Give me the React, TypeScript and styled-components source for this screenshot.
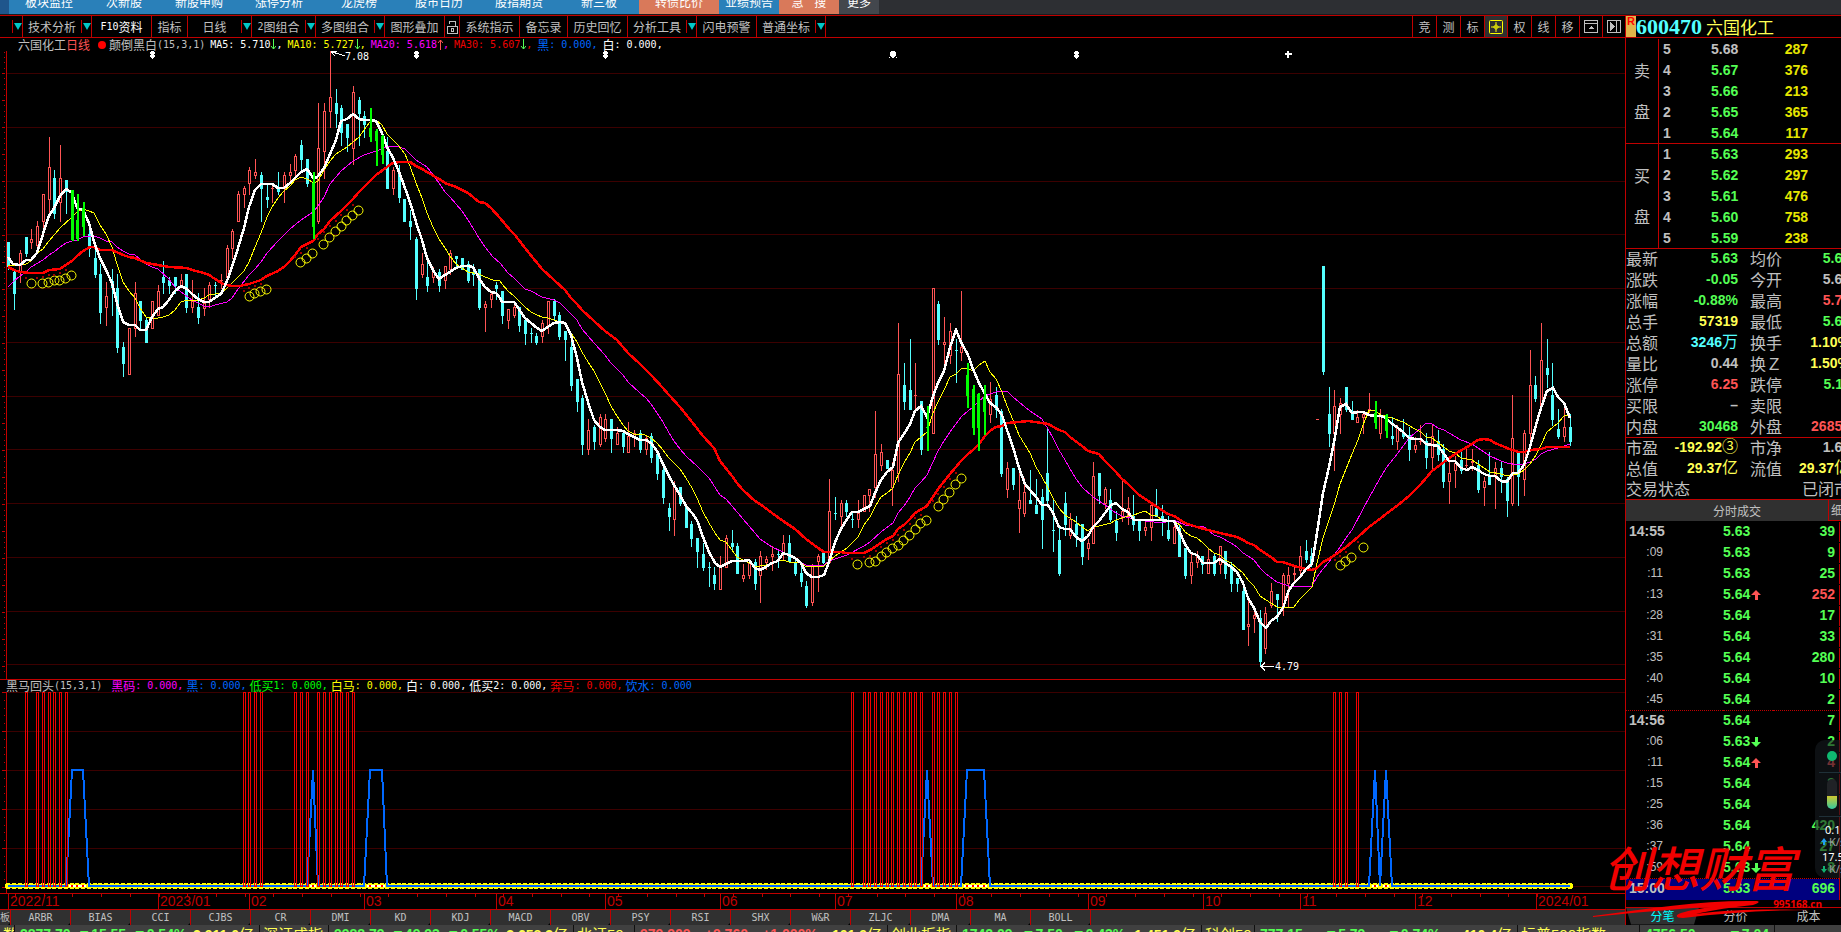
import React from "react";
import styled, { createGlobalStyle } from "styled-components";

const RED = "#c00000";
const GREY = "#c0c0c0";
const GREEN = "#54ff54";
const CYAN = "#54ffff";
const YELLOW = "#ffff54";
const ROSE = "#ff5454";
const PANEL = "#303030";

const Global = createGlobalStyle`
  *, *::before, *::after { box-sizing: border-box; }
  body { margin: 0; background: #000; color: ${GREY}; font: 12px "Noto Sans CJK SC", sans-serif; overflow: hidden; }
  button { margin: 0; padding: 0; border: 0; background: none; color: inherit; font: inherit; cursor: pointer; white-space: nowrap; }
  table { border-collapse: collapse; table-layout: fixed; }
  th, td { padding: 0; font-weight: normal; text-align: left; white-space: nowrap; }
`;

const Page = styled.div`
  position: relative;
  display: flex;
  flex-direction: column;
  height: 100vh;
  overflow: hidden;
  background: #000;
`;

/* ---------- top strip ---------- */
const TopStrip = styled.nav`
  display: flex;
  align-items: flex-end;
  flex: none;
  height: 15px;
  padding-left: 9px;
  overflow: hidden;
  border-bottom: 1px solid #1b1c1e;
  background: linear-gradient(to right, #1f568c 9px, #2d2f33 9px);
`;
const StripTab = styled.button<{ $w: number; $bg: string }>`
  flex: none;
  width: ${(p) => p.$w}px;
  height: 24px;
  line-height: 22px;
  text-align: center;
  white-space: pre;
  color: #fff;
  background: ${(p) => p.$bg};
`;

/* ---------- main ---------- */
const Main = styled.main`
  display: flex;
  flex: none;
  height: 910px;
  border-top: 1px solid ${RED};
`;
const Left = styled.section`
  display: flex;
  flex-direction: column;
  flex: 1;
  min-width: 0;
  overflow: hidden;
`;
const Toolbar = styled.div`
  display: flex;
  align-items: stretch;
  flex: none;
  height: 22px;
  padding-left: 12px;
  border-bottom: 1px solid ${RED};
`;
const ToolButton = styled.button<{ $w: number; $end?: boolean; $active?: boolean }>`
  display: flex;
  align-items: center;
  justify-content: center;
  flex: none;
  width: ${(p) => p.$w}px;
  border-right: ${(p) => (p.$end ? `1px solid ${RED}` : "0")};
  color: ${(p) => (p.$active ? "#fff" : GREY)};
  line-height: 20px;
`;
const ArrowButton = styled.button`
  display: flex;
  align-items: center;
  flex: none;
  width: 11px;
  border-right: 1px solid ${RED};
  &::before { content: ""; width: 1px; height: 13px; background: ${RED}; }
  &::after { content: ""; width: 0; height: 0; margin-left: 1px; border: 4px solid transparent; border-top: 7px solid #00c8c8; border-bottom: 0; }
`;
const Spacer = styled.div`
  flex: 1;
`;
const SideTool = styled.button<{ $on?: boolean; $w?: number }>`
  display: flex;
  align-items: center;
  justify-content: center;
  flex: none;
  width: ${(p) => p.$w || 24}px;
  border-left: 1px solid ${RED};
  background: ${(p) => (p.$on ? PANEL : "none")};
`;

const Mono = styled.span`
  font-family: "DejaVu Sans Mono", monospace;
  font-size: 10px;
`;
const Legend = styled.div<{ $h: number; $pad: number; $gap: number }>`
  display: flex;
  align-items: center;
  flex: none;
  gap: ${(p) => p.$gap}px;
  height: ${(p) => p.$h}px;
  padding-left: ${(p) => p.$pad}px;
  line-height: 12px;
  white-space: pre;
`;
const LegendItem = styled.span<{ $c?: string }>`
  display: flex;
  align-items: center;
  color: ${(p) => p.$c || GREY};
`;
const Dot = styled.i`
  width: 8px;
  height: 8px;
  margin: 0 3px 0 8px;
  border-radius: 50%;
  background: #ff0000;
`;
const Chart = styled.svg`
  display: block;
  flex: none;
  width: 100%;
`;
const SubPanel = styled.div`
  flex: none;
  border-top: 1px solid ${RED};
  border-bottom: 1px solid ${RED};
`;
const TabRow = styled.div`
  display: flex;
  flex: none;
  height: 15px;
  background: ${PANEL};
`;
const IndicatorTab = styled.button<{ $w: number }>`
  position: relative;
  flex: none;
  width: ${(p) => p.$w}px;
  border-right: 1px solid ${RED};
  font-family: "DejaVu Sans Mono", "Noto Sans CJK SC", monospace;
  font-size: 10px;
  line-height: 14px;
  text-align: center;
  overflow: hidden;
  &::after {
    content: "";
    position: absolute;
    right: -1px;
    bottom: 0;
    border: 3px solid transparent;
    border-right: 0;
    border-top: 0;
    border-bottom-color: #000;
  }
`;

/* ---------- quote panel ---------- */
const Quote = styled.aside`
  flex: none;
  width: 216px;
  border-left: 1px solid ${RED};
  overflow: hidden;
`;
const QuoteHead = styled.h1`
  display: flex;
  align-items: center;
  height: 22px;
  margin: 0;
  border-bottom: 1px solid ${RED};
  font-weight: normal;
`;
const Badge = styled.span`
  width: 10px;
  height: 21px;
  background: #e0b44a;
  color: #f00;
  font: bold 11px/11px "Liberation Sans", sans-serif;
  text-align: center;
`;
const Code = styled.span`
  font: bold 22px/20px "Liberation Serif", serif;
  color: ${CYAN};
`;
const StockName = styled.span`
  margin-left: 4px;
  font-size: 17px;
  line-height: 20px;
  color: ${YELLOW};
`;
const Block = styled.div<{ $h: number; $top?: number }>`
  display: flex;
  height: ${(p) => p.$h}px;
  padding-top: ${(p) => p.$top || 0}px;
  overflow: hidden;
  border-bottom: 1px solid ${RED};
`;
const Side = styled.div`
  display: flex;
  flex-direction: column;
  flex: none;
  gap: 21px;
  width: 33px;
  padding-top: 21px;
  border-right: 1px solid ${RED};
  font-size: 16px;
  line-height: 20px;
  text-align: center;
`;
const Num = styled.td<{ $c?: string; $right?: boolean }>`
  color: ${(p) => p.$c || GREY};
  text-align: ${(p) => (p.$right ? "right" : "left")};
  font-family: "Liberation Sans", "Noto Sans CJK SC", sans-serif;
  font-size: 14px;
  font-weight: bold;
`;
const Book = styled.table`
  flex: none;
  width: 182px;
  tr { height: 21px; line-height: 21px; }
  th { padding-left: 4px; font: bold 14px/21px "Liberation Sans", sans-serif; }
`;
const Facts = styled.table`
  flex: none;
  width: 224px;
  tr { height: 21px; line-height: 19px; vertical-align: top; }
  th { font-size: 16px; }
  th + td + th { padding-left: 12px; }
`;
const Unit = styled.span`
  font-size: 16px;
  font-weight: normal;
  line-height: 16px;
`;
const Status = styled.div`
  display: flex;
  justify-content: space-between;
  width: 224px;
  height: 19px;
  font-size: 16px;
  line-height: 17px;
`;
const Column = styled.div`
  flex: none;
`;
const TickHead = styled.div`
  display: flex;
  height: 21px;
  background: ${PANEL};
  overflow: hidden;
`;
const TickTab = styled.button<{ $grow?: boolean }>`
  flex: ${(p) => (p.$grow ? "none" : "1")};
  width: ${(p) => (p.$grow ? "202px" : "auto")};
  padding-left: ${(p) => (p.$grow ? "20px" : "2px")};
  border-left: ${(p) => (p.$grow ? "0" : `1px solid ${RED}`)};
  border-bottom: ${(p) => (p.$grow ? "0" : `1px solid ${RED}`)};
  line-height: 18px;
`;
const Ticks = styled.table`
  width: 214px;
  border-right: 1px solid ${RED};
`;
const Tick = styled.tr<{ $dotted?: boolean; $on?: boolean }>`
  height: 21px;
  line-height: 18px;
  vertical-align: top;
  background: ${(p) => (p.$on ? "#00007f" : "none")};
  td, th { border-top: ${(p) => (p.$dotted ? `1px dotted ${RED}` : "1px solid transparent")}; }
  td:last-child { padding-right: 4px; }
`;
const Time = styled.th<{ $major?: boolean }>`
  padding-left: 3px;
  font: ${(p) => (p.$major ? "bold 14px" : "12px")} / 18px "Liberation Sans", sans-serif;
  text-align: ${(p) => (p.$major ? "left" : "right")};
`;
const Arrow = styled.svg`
  margin-left: 1px;
  vertical-align: -1px;
`;
const BottomTabs = styled.div`
  display: flex;
  height: 19px;
  margin-top: 7px;
  border-top: 1px solid ${RED};
  border-bottom: 1px solid ${RED};
`;
const BottomTab = styled.button<{ $on?: boolean }>`
  flex: none;
  width: 73px;
  line-height: 16px;
  color: ${(p) => (p.$on ? "#00ffff" : GREY)};
  background: ${(p) => (p.$on ? PANEL : "none")};
  clip-path: polygon(0 0, 100% 0, calc(100% - 5px) 100%, 5px 100%);
`;
const VolumeText = styled.span`
  display: inline-block;
  width: 47px;
  text-align: right;
`;

/* ---------- ticker ---------- */
const Ticker = styled.footer`
  display: flex;
  flex: 1;
  min-height: 0;
  overflow: hidden;
  background: #404040;
`;
const Cell = styled.div<{ $w: number; $name?: boolean }>`
  display: flex;
  flex: none;
  justify-content: space-between;
  gap: 6px;
  width: ${(p) => p.$w}px;
  height: 22px;
  padding: 0 ${(p) => (p.$name ? 3 : 5)}px;
  border-right: 1px solid #101010;
  overflow: hidden;
  color: ${YELLOW};
  font: bold 14px/19px "Liberation Sans", "Noto Sans CJK SC", sans-serif;
  white-space: nowrap;
`;
const IndexName = styled.span`
  font-weight: normal;
  font-size: 15px;
`;
const Move = styled.span<{ $up?: boolean }>`
  color: ${(p) => (p.$up ? ROSE : GREEN)};
`;

/* ---------- overlays ---------- */
const NetWidget = styled.div`
  position: absolute;
  top: 740px;
  right: 0;
  width: 26px;
  height: 138px;
  border-radius: 10px 0 0 10px;
  background: rgba(22, 26, 31, 0.6);
  overflow: hidden;
  color: #fff;
`;
const Mark = styled.div`
  position: absolute;
  top: 838px;
  right: 36px;
  width: 212px;
  height: 84px;
  color: #f00000;
  pointer-events: none;
`;
const MarkText = styled.div`
  font: italic 500 48px/56px "Noto Sans CJK SC", sans-serif;
  text-align: center;
`;
const MarkSite = styled.div`
  position: absolute;
  right: -17px;
  top: 58px;
  font: bold 10px/16px "Open Sans", sans-serif;
`;
const MarkStroke = styled.svg`
  position: absolute;
  left: 0;
  top: 56px;
`;

/* ---------- chart data ---------- */
type Kind = "u" | "d" | "g";
interface Segment {
  first: number;
  x: number;
  y: number;
  bars: string;
  ma5: string;
  ma10: string;
  ma20: string;
  ma30: string;
  rings: string;
}

/* Bars: kind high bodyTop bodyBottom low, in thirds of a pixel below the segment's origin. */
const SEGMENTS: Segment[] = [
  {
    first: 0, x: 0, y: 40,
    bars: `d606 606 680 690|d690 697 762 810|u630 639 700 729|d591 591 642 651|u567 597 608 627|u543 558 617 636|u462 462 545 576|u291 381 479 530|d390 414 522 537|u315 414 488 546|d420 420 455 522|g450 450 600 602|g462 540 596 602|g486 503 560 588|d545 583 626 651|d620 654 705 714|d672 702 819 852|u726 768 803 858|d687 722 745 828|d702 744 924 939|d906 921 972 1011|u864 864 1004 1005|u726 759 866 891|d783 783 843 867|d831 840 909 909|u783 783 866 867|u735 753 827 828|d663 711 729 762|d711 720 738 762|d711 711 738 762|u702 720 737 741|d702 702 804 819|u720 784 803 819|d759 801 834 852|u744 789 806 828|u726 735 781 803|d726 735 737 774|u702 720 722 747|u615 624 713 729|u567 573 626 657|u453 462 545 546|u438 444 464 504|u381 390 431 465|u357 396 407 417|d396 405 447 546|d432 471 480 504|u438 444 446 489|d396 444 456 465|u396 405 446 489|u372 396 407 432|u342 348 392 420|d300 315 360 392|d357 357 432 440|g396 430 560 597|u189 324 545 552|u189 213 335 417|u33 171 215 264|d147 189 222 264|d195 204 279 318|d252 252 294 336|u138 156 326 375|d171 180 222 318|d213 228 255 294|g204 264 290 306|g267 273 303 378|g285 288 345 372|d291 333 447 447|u380 390 446 465|d375 402 474 489|d477 477 546 546|d510 543 561 600|d591 597 747 780|u639 672 704 714|d654 711 738 756|u680 696 713 728|d687 696 738 756|u678 678 722 747|u630 639 689 704|d648 648 657 684|d654 654 690 690|d663 672 723 729|d672 696 705 738|d687 687 804 810|u783 792 803 876|u756 762 779 804|d726 735 747 780`,
    ma5: "25,650 40,672 61,674 79,661 94,661 112,640 130,583 148,528 163,503 181,468 199,446 215,460 231,505 249,510 267,550 283,605 301,654 319,690 337,730 352,790 370,847 388,855 406,855 421,870 439,870 457,832 475,808 490,801 508,780 526,753 544,738 560,747 577,762 595,777 613,786 628,786 646,775 664,762 682,722 697,682 715,625 733,565 748,500 766,450 784,431 802,432 817,432 835,444 853,443 871,430 886,415 904,395 922,388 943,417 955,408 973,385 991,342 1009,300 1024,242 1042,236 1060,223 1078,236 1093,240 1110,240 1128,242 1146,280 1162,322 1180,355 1198,395 1216,443 1231,485 1249,545 1267,600 1282,655 1300,690 1318,717 1336,705 1351,695 1369,683 1387,678 1405,679 1420,681 1438,715 1456,742 1474,757 1489,760 1499,775",
    ma10: "25,674 60,676 79,672 94,663 112,640 130,628 148,603 181,565 215,530 231,515 249,508 267,512 283,520 301,556 319,583 337,622 352,672 370,725 388,752 406,775 421,804 439,832 460,836 490,830 508,826 526,811 544,785 560,779 577,780 595,780 613,773 628,765 646,761 664,760 682,745 697,728 715,712 733,692 748,665 766,620 784,578 802,530 817,500 835,475 853,452 871,437 886,420 904,412 922,418 943,430 955,424 973,390 991,362 1009,342 1042,322 1060,307 1078,290 1093,270 1110,246 1128,240 1146,255 1162,282 1180,300 1198,318 1216,342 1231,378 1249,430 1267,475 1282,520 1300,562 1318,597 1336,625 1351,648 1369,672 1387,685 1405,695 1438,701 1456,712 1480,719 1499,722",
    ma20: "25,740 43,723 61,708 79,697 94,680 130,661 148,645 163,637 181,620 199,608 215,604 231,600 249,592 283,587 301,594 319,602 337,605 352,620 370,634 388,641 406,646 421,658 439,672 457,680 475,688 508,716 526,742 544,755 577,780 595,790 613,797 628,802 646,796 682,787 697,773 715,748 748,705 766,688 784,667 802,640 835,602 871,568 904,540 938,517 955,498 973,470 991,432 1024,392 1060,362 1093,345 1128,333 1162,321 1190,319 1216,328 1231,341 1249,360 1282,382 1318,428 1336,455 1351,470 1387,512 1405,540 1420,565 1438,595 1456,622 1480,650 1499,670",
    ma30: "25,680 43,689 61,695 94,699 130,698 148,691 181,686 199,674 215,662 231,647 249,633 270,621 283,621 301,629 337,631 370,645 388,652 406,654 439,668 475,674 508,680 560,684 577,691 613,700 628,706 646,716 664,730 682,736 697,739 720,738 748,731 784,720 802,709 835,692 853,680 871,663 886,645 904,620 938,602 955,583 973,567 991,543 1024,514 1042,495 1060,477 1078,457 1110,422 1128,404 1162,381 1180,370 1198,367 1231,366 1249,378 1267,387 1282,397 1318,418 1336,428 1369,440 1405,460 1438,485 1456,490 1474,503 1499,533",
    rings: "94,730 127,730 145,727 163,720 178,720 196,715 214,704 748,767 763,760 781,754 799,748 901,667 919,653 937,640 970,613 988,592 1006,574 1024,557 1039,541 1057,526 1075,509",
  },
  {
    first: 86, x: 450, y: 230,
    bars: `d183 183 258 282|u237 237 272 297|u222 232 257 264|d231 231 288 306|d267 270 312 345|d294 309 311 339|d309 318 339 345|u270 279 320 339|u213 213 287 312|d207 213 258 270|d246 255 321 330|d303 303 330 393|d336 351 468 483|d447 447 516 546|d495 504 645 675|u567 600 659 675|d585 591 636 660|u552 561 644 651|u552 567 626 636|d567 567 627 669|u591 609 644 645|d603 609 651 669|u576 618 668 669|u600 609 623 651|d600 609 660 669|u615 625 659 675|d609 618 684 699|d663 672 732 750|d714 720 804 822|d819 834 861 903|u753 765 869 918|d771 771 822 828|d822 828 894 894|d873 882 927 951|d924 924 966 1014|d939 972 1014 1023|d996 1011 1013 1071|d1011 1035 1062 1080|u978 1008 1079 1080|u915 924 1013 1014|d900 939 951 960|d939 948 1032 1032|u1002 1035 1046 1056|u987 996 1037 1047|d987 996 1062 1080|u963 978 1037 1119|u978 987 998 1020|u948 972 980 1023|d963 972 974 1014|u915 939 971 990|d915 939 996 998|d987 996 1032 1038|d1005 1029 1056 1071|d1053 1068 1128 1134|u1002 1008 1118 1128|u972 978 997 1086|d966 966 999 1003|u747 843 999 1002|d801 849 851 870|u810 819 860 894|d810 819 846 861|d843 867 869 894|u810 849 869 894|u795 795 845 846|u777 777 797 846|u543 672 773 804|u642 666 707 723|d690 690 717 717|u696 720 773 828|u279 432 731 756`,
    ma5: "157,215 175,216 193,216 208,238 226,264 244,279 262,295 277,302 295,290 313,280 331,277 346,280 364,315 382,385 397,455 415,515 433,571 451,591 466,599 484,599 502,601 520,604 535,613 553,622 571,629 589,631 604,640 622,664 640,703 658,738 673,765 691,796 709,827 727,850 742,870 760,922 778,965 796,998 811,1012 829,1003 847,992 862,992 880,992 898,989 916,1015 931,1020 949,1011 967,1000 985,994 1000,970 1018,974 1036,985 1054,1000 1069,1030 1087,1041 1105,1041 1123,1034 1138,995 1156,937 1174,898 1192,868 1207,846 1225,846 1243,836 1261,827 1276,790 1294,750 1312,725 1330,712 1345,640",
    ma10: "157,163 175,182 193,197 208,212 226,230 244,245 262,256 277,262 295,265 313,270 331,276 346,282 364,310 382,335 397,365 415,395 433,424 451,460 466,490 484,527 502,557 520,585 535,603 553,613 580,613 604,623 622,638 640,660 658,685 673,700 691,718 709,745 727,775 742,805 760,845 778,880 796,910 811,930 829,935 847,960 862,980 880,990 898,1000 916,1008 931,1009 949,1004 967,998 985,992 1000,990 1018,996 1054,999 1069,1011 1087,1008 1123,1009 1138,993 1156,977 1174,966 1192,955 1207,940 1225,920 1243,885 1261,860 1276,830 1294,800 1312,790 1330,773 1345,735",
    ma20: "175,130 193,145 226,178 244,184 277,202 313,210 331,220 346,235 382,270 397,298 433,340 466,375 484,400 520,435 535,457 571,490 589,504 604,523 622,548 640,575 658,610 673,633 691,656 709,677 742,708 778,745 811,796 829,808 847,828 880,868 916,908 931,926 967,950 1000,966 1036,984 1054,1000 1069,1006 1123,1005 1138,993 1174,982 1192,976 1243,949 1261,935 1294,905 1330,878 1345,850",
    ma30: "180,0 196,14 226,53 277,118 313,150 346,180 364,204 382,222 397,240 433,272 466,303 502,331 535,370 571,403 604,434 640,473 658,495 691,530 727,575 760,618 793,655 811,692 847,737 862,759 880,780 916,812 931,823 967,848 1000,872 1036,898 1069,928 1105,955 1123,965 1170,966 1192,969 1243,969 1261,960 1276,952 1312,927 1330,917 1345,897",
    rings: "1222,1003 1258,997 1275,992 1292,979 1309,967 1327,955",
  },
  {
    first: 156, x: 820, y: 260,
    bars: `d309 375 426 450|d237 390 450 450|u309 405 407 447|d423 423 570 585|g438 500 503 573|u84 84 521 522|d123 132 240 255|u171 246 254 312|u189 213 287 312|d237 270 272 369|u93 261 278 303|g309 345 408 444|g375 387 503 525|g399 402 503 573|g375 411 456 525|u366 417 464 489|d381 405 450 474|d447 453 642 651|u606 624 689 714|d624 624 675 690|u639 720 746 819|u654 696 761 771|d630 720 732 732|d657 735 762 762|d687 711 780 867|d501 639 723 735|d714 810 812 876|d795 840 942 948|d696 729 795 828|u759 777 827 837|d768 792 825 861|d792 792 891 915|u837 849 866 900|u606 648 851 852|d639 639 708 732|u681 687 731 747|d687 720 780 786|d753 783 819 843|u660 753 773 786|u711 744 770 795|d705 768 795 813|d777 777 813 843|u777 801 812 828|u726 735 803 843|d687 744 771 772|d735 768 780 828|d768 810 837 843|u783 801 851 852|d792 804 891 891|d864 864 948 957|u882 906 947 972|u873 885 908 924|d888 888 915 942|u864 897 941 942|d882 888 942 948|u858 858 914 942|d873 873 942 957|d906 918 972 996|d954 954 972 996`,
    ma5: "253,522 271,492 286,452 304,438 320,470 340,408 355,368 373,333 391,262 409,211 424,245 443,285 458,328 476,370 494,403 511,430 529,440 547,465 562,510 580,562 598,625 616,672 631,690 649,712 667,734 685,735 700,760 718,802 736,807 751,807 769,830 787,843 805,828 820,800 838,784 856,758 874,734 889,728 907,748 925,757 943,780 958,781 976,779 1027,779 1045,782 1063,783 1081,820 1096,852 1114,878 1132,886 1150,908 1183,908 1201,898 1216,910 1234,922 1252,935",
    ma10: "253,610 271,580 286,545 304,530 320,517 340,460 355,425 373,390 391,350 409,343 424,328 440,325 458,332 476,316 494,303 511,335 529,357 547,395 562,437 580,480 598,525 616,555 631,580 649,620 667,650 685,685 700,715 718,745 736,765 769,787 787,802 805,814 820,800 838,797 874,790 889,780 907,775 925,769 943,766 958,760 976,754 994,764 1012,768 1027,780 1063,783 1081,795 1096,817 1114,829 1132,835 1150,848 1165,865 1183,880 1201,886 1216,900 1234,910 1252,925",
    ma20: "253,737 271,710 286,685 304,665 320,645 340,605 355,572 373,542 391,515 409,492 424,470 443,452 458,440 476,422 494,408 511,401 529,395 562,394 580,411 598,427 616,440 631,454 667,478 685,507 700,535 718,570 736,600 769,657 787,680 820,710 856,735 889,760 907,769 943,777 976,783 1027,788 1063,780 1096,795 1114,799 1150,799 1183,825 1201,832 1234,850 1252,862",
    ma30: "253,795 271,778 286,760 320,737 340,710 355,686 391,642 424,602 443,583 458,571 476,552 494,529 511,514 529,500 547,497 562,490 598,487 625,483 667,490 685,492 718,511 736,516 751,530 787,558 805,574 838,583 856,604 889,637 907,658 925,672 943,690 958,706 976,717 1012,740 1045,762 1063,768 1096,788 1132,800 1165,811 1201,820 1252,832",
    rings: "235,856 250,841 268,826 286,807 301,790 319,781 355,739 370,718 388,695 406,673 424,655",
  },
  {
    first: 215, x: 1180, y: 250,
    bars: `d1008 1023 1140 1140|u1050 1122 1130 1188|u1068 1095 1106 1149|d1080 1104 1236 1250|u1071 1089 1196 1212|u999 1023 1067 1074|d1032 1032 1050 1116|u969 975 1070 1098|u951 975 1001 1071|u951 969 976 1000|u888 918 962 972|d870 903 930 939|d893 918 942 950|u508 508 509 509|d48 48 366 375|d411 492 552 591|u420 468 551 663|u444 459 494 552|d411 411 480 486|d453 486 510 511|u480 501 518 518|u483 492 503 552|u429 477 479 490|g453 490 519 537|u477 495 551 567|g492 494 543 563|d501 558 567 585|u525 534 575 600|d507 549 561 567|d531 555 600 633|u561 585 599 609|u525 573 575 585|d549 573 624 657|u522 558 623 657|d540 573 615 633|d582 597 696 714|u630 669 696 762|u618 639 662 714|d606 630 663 672|u591 645 647 654|u597 633 638 663|d630 645 720 729|u681 693 713 768|d606 675 705 705|u636 654 680 777|d636 654 681 729|d681 687 753 801|u435 564 761 768|d603 609 681 768|u540 549 689 738|u300 405 551 606|d378 405 447 456|u219 330 470 471|d267 354 375 414|d339 435 510 528|d477 537 561 567|u462 531 560 576|d492 531 576 588`,
    ma5: "190,1000 205,1045 223,1073 241,1117 259,1134 274,1113 292,1100 310,1075 328,1020 343,1000 361,980 379,957 397,942 412,850 430,730 448,650 466,560 481,470 499,463 517,490 535,485 550,486 568,494 586,498 604,499 619,505 637,521 655,534 670,545 688,564 706,567 724,568 739,583 757,586 775,588 793,611 808,632 826,633 844,654 862,660 877,650 895,659 913,672 931,678 946,679 964,692 982,696 1000,670 1015,668 1033,645 1051,590 1069,525 1084,475 1102,422 1118,413 1135,442 1153,460 1171,505",
    ma10: "190,970 205,990 223,1008 241,1037 259,1051 274,1058 292,1072 343,1070 361,1048 379,1030 397,1010 412,940 430,865 448,810 466,755 481,703 499,658 517,612 535,570 550,525 568,481 586,483 604,496 637,505 670,517 706,536 724,545 739,560 757,564 793,590 808,603 826,609 844,623 862,626 877,630 895,643 931,666 964,671 982,679 1000,672 1015,673 1033,660 1051,642 1069,615 1084,585 1102,545 1135,520 1153,497 1171,495",
    ma20: "190,908 205,919 223,930 241,955 259,973 292,995 328,1009 397,1007 412,980 430,958 448,935 466,912 481,890 499,865 517,840 550,778 584,712 619,655 655,610 688,565 706,548 724,533 739,520 757,523 775,533 793,541 808,550 844,570 877,583 895,595 931,618 964,632 982,640 1015,644 1033,643 1051,636 1069,628 1084,613 1102,604 1135,595 1153,587 1171,583",
    ma30: "190,871 205,880 223,886 241,900 274,922 292,935 310,937 343,948 379,958 397,960 412,953 430,937 448,927 466,914 499,890 517,876 535,862 568,832 604,803 619,792 655,765 688,737 724,702 757,662 793,635 826,613 862,590 895,570 913,566 931,569 946,578 982,595 1015,605 1033,606 1051,600 1084,597 1102,591 1171,591",
    rings: "481,946 496,934 514,922 550,892",
  },
];

const CHART_TOP = 51;
const barX = (i: number) => Math.floor(8.9 + 5.74 * i);

const points = (key: "ma5" | "ma10" | "ma20" | "ma30" | "rings") =>
  SEGMENTS.flatMap((s) =>
    s[key].split(" ").map((p) => {
      const [x, y] = p.split(",").map(Number);
      return [Math.round(s.x + x / 3), Math.round(s.y + y / 3)];
    }),
  );
const line = (key: "ma5" | "ma10" | "ma20" | "ma30") => points(key).map((p) => p.join(",")).join(" ");

const BARS = SEGMENTS.flatMap((s) =>
  s.bars.split("|").map((row, n) => {
    const [high, top, bottom, low] = row.slice(1).split(" ").map((v) => Math.round(s.y + Number(v) / 3));
    return { i: s.first + n, kind: row[0] as Kind, high, top, bottom, low };
  }),
);

const GRID = [73, 127, 181, 234, 288, 342, 396, 449, 503, 557, 611, 664];
const STARS = [152, 416, 605, 1076];

function Candle({ bar }: { bar: (typeof BARS)[number] }) {
  const x = barX(bar.i);
  const { kind, high, top, bottom, low } = bar;
  if (kind === "u") {
    return (
      <g fill={ROSE}>
        <rect x={x} y={high} width={1} height={top - high} />
        <rect x={x} y={bottom} width={1} height={low - bottom} />
        {bottom - top > 1 ? (
          <rect x={x - 0.5} y={top + 0.5} width={2} height={bottom - top - 1} fill="none" stroke={ROSE} />
        ) : (
          <rect x={x - 1} y={top} width={3} height={1} />
        )}
      </g>
    );
  }
  const green = kind === "g";
  return (
    <g fill={green ? "#00ff00" : CYAN}>
      <rect x={x} y={high} width={green ? 2 : 1} height={low - high} />
      <rect x={x - 1} y={top} width={3} height={Math.max(1, bottom - top)} />
    </g>
  );
}

function PriceChart() {
  return (
    <Chart height={628} role="img" aria-label="六国化工日线">
      <g transform={`translate(0,-${CHART_TOP})`} shapeRendering="crispEdges">
        {GRID.map((y) => (
          <rect key={y} x={7} y={y} width="100%" height={1} fill="#3c0000" />
        ))}
        <rect x={6} y={51} width={1} height={628} fill={RED} />
        {Array.from({ length: 116 }, (_, n) => {
          const y = Math.round(51.5 + n * 5.39);
          const major = n % 5 === 4;
          return <rect key={n} x={major ? 2 : 4} y={y} width={major ? 3 : 1} height={1} fill={RED} />;
        })}
        {BARS.filter((b) => b.kind !== "g").map((b) => (
          <Candle key={b.i} bar={b} />
        ))}
        <polyline points={line("ma20")} fill="none" stroke="#ff00ff" />
        <polyline points={line("ma10")} fill="none" stroke="#ffff00" />
        <polyline points={line("ma30")} fill="none" stroke="#ff0000" strokeWidth={2.5} />
        <polyline points={line("ma5")} fill="none" stroke="#fff" strokeWidth={2.5} />
        {BARS.filter((b) => b.kind === "g").map((b) => (
          <Candle key={b.i} bar={b} />
        ))}
        {points("rings").map(([x, y]) => (
          <g key={x}>
            <circle cx={x + 0.5} cy={y + 0.5} r={4.5} fill="none" stroke="#ffff00" shapeRendering="auto" />
            <rect x={x - 6} y={y - 6} width={2} height={2} fill="#a00000" />
          </g>
        ))}
        {STARS.map((x) => (
          <path key={x} d={`M${x} 50h1v1h1v1h1v2h-1v1h1v2h-1v1h-1v1h-1v-1h-1v-1h-1v-2h1v-1h-1v-2h1v-1h1z`} fill="#fff" />
        ))}
        <path d="M891 51h4v1h1v4h-1v1h-4v-1h-1v-4h1z" fill="#fff" />
        <path d="M889 50h1v1h-1zM892 50h2v1h-2zM896 50h1v1h-1zM889 57h1v1h-1zM892 57h2v1h-2zM896 57h1v1h-1z" fill="#fff" />
        <path d="M1285 54h7M1288 50v8" fill="none" stroke="#fff" strokeWidth={2} />
        <path d="M335 56l-4-4M331 51.500h6M332 52l7 2l6 2" fill="none" stroke="#fff" />
        <path d="M1261 666.500h13M1265 662.500l-4 4l4 4" fill="none" stroke="#fff" />
        <g fill="#fff" fontFamily="DejaVu Sans Mono, monospace" fontSize={10}>
          <text x={345} y={60}>7.08</text>
          <text x={1275} y={670}>4.79</text>
        </g>
      </g>
    </Chart>
  );
}

const SIGNALS: [number, number][] = [[3, 3], [5, 10], [41, 44], [50, 52], [54, 60], [147, 147], [149, 159], [161, 165], [231, 233], [235, 235]];
const PULLBACKS: [number, number][] = [[11, 13], [53, 53], [63, 65], [160, 160], [167, 170], [238, 238], [240, 240]];
const SUB_GRID = [692, 731, 770, 809, 848, 886];

function SignalChart() {
  const columns = SIGNALS.flatMap(([a, b]) => Array.from({ length: b - a + 1 }, (_, n) => a + n));
  const lit = PULLBACKS.flatMap(([a, b]) => Array.from({ length: b - a + 1 }, (_, n) => a + n));
  const blue = [
    "8,886",
    ...PULLBACKS.flatMap(([a, b]) => [`${barX(a - 1)},886`, `${barX(a)},770`, `${barX(b)},770`, `${barX(b + 1)},886`]),
    `${barX(272)},886`,
  ].join(" ");
  return (
    <Chart height={201} role="img" aria-label="黑马回头">
      <g transform="translate(0,-692)" shapeRendering="crispEdges">
        {SUB_GRID.map((y) => (
          <rect key={y} x={7} y={y} width="100%" height={1} fill="#3c0000" />
        ))}
        <rect x={6} y={680} width={1} height={213} fill={RED} />
        {Array.from({ length: 26 }, (_, n) => {
          const major = n % 5 === 0;
          return <rect key={n} x={major ? 2 : 4} y={Math.round(692 + n * 7.8)} width={major ? 4 : 1} height={1} fill={RED} />;
        })}
        {Array.from({ length: 273 }, (_, i) => (
          <g key={i} fill="#ffff00">
            <rect x={barX(i) - 2} y={883} width={4} height={6} />
            <rect x={barX(i) - 3} y={884} width={6} height={4} />
          </g>
        ))}
        <polyline points={blue} fill="none" stroke="#0068ff" strokeWidth={2} strokeLinejoin="bevel" />
        {columns.map((i) => (
          <rect key={i} x={barX(i) - 0.5} y={692.5} width={2} height={194} fill="none" stroke="#f00000" />
        ))}
        {lit.map((i) => (
          <g key={i}>
            <rect x={barX(i) - 3} y={885} width={6} height={2} fill="#fff" />
            <rect x={barX(i) - 1} y={885} width={2} height={2} fill="#f00" />
          </g>
        ))}
      </g>
    </Chart>
  );
}

const MONTHS: [number, string][] = [
  [8, "2022/11"], [158, "2023/01"], [249, "02"], [364, "03"], [496, "04"], [605, "05"], [720, "06"], [835, "07"],
  [956, "08"], [1088, "09"], [1203, "10"], [1300, "11"], [1415, "12"], [1536, "2024/01"],
];

function DateAxis() {
  return (
    <Chart height={16} role="img" aria-label="日期">
      <g shapeRendering="crispEdges" fill={RED}>
        {Array.from({ length: 54 }, (_, n) => (
          <rect key={n} x={Math.round(15 + n * 28.72)} y={0} width={1} height={3} />
        ))}
        {MONTHS.map(([x]) => (
          <rect key={x} x={x} y={0} width={1} height={15} />
        ))}
        <rect x={0} y={15} width="100%" height={1} />
      </g>
      <g fill={RED} fontFamily="Liberation Sans, sans-serif" fontSize={14}>
        {MONTHS.map(([x, label]) => (
          <text key={x} x={x + 2} y={12}>{label}</text>
        ))}
      </g>
    </Chart>
  );
}

const BLUE = "#2a80b9";
const ORANGE = "#d9795a";
const STRIP: [string, number, string][] = [
  ["板块监控", 80, BLUE], ["次新股", 70, BLUE], ["新股申购", 80, BLUE], ["涨停分析", 80, BLUE], ["龙虎榜", 80, BLUE],
  ["股市日历", 80, BLUE], ["股指期货", 80, BLUE], ["新三板", 80, BLUE], ["转债比价", 80, ORANGE], ["业绩预告", 60, BLUE],
  ["急    搜", 60, ORANGE], ["更多", 40, "#43474d"],
];

type Tool = { label: React.ReactNode; w: number; menu?: boolean; active?: boolean };
const TOOLS: Tool[] = [
  { label: "技术分析", w: 58, menu: true },
  { label: <><Mono>F10</Mono>资料</>, w: 60, active: true },
  { label: "指标", w: 36 },
  { label: "日线", w: 53, menu: true },
  { label: <><Mono>2</Mono>图组合</>, w: 53, menu: true },
  { label: "多图组合", w: 58, menu: true },
  { label: "图形叠加", w: 60 },
  {
    label: (
      <svg width="11" height="14" viewBox="0 0 11 14" fill="none" stroke={GREY} shapeRendering="crispEdges" role="img" aria-label="锁定">
        <path d="M0.500 6.500h10v7h-10zM2.500 4v-2l1-1h4l1 1v4M4.500 8.500h2v3h-2z" />
      </svg>
    ),
    w: 15,
  },
  { label: "系统指示", w: 60 },
  { label: "备忘录", w: 48 },
  { label: "历史回忆", w: 60 },
  { label: "分析工具", w: 58, menu: true },
  { label: "闪电预警", w: 60 },
  { label: "普通坐标", w: 58, menu: true },
];

const PRICE_LEGEND: [string, string, string, string][] = [
  ["", "MA5: 5.710", "#fff", "down"],
  ["", "MA10: 5.727", "#ffff00", "down"],
  ["", "MA20: 5.618", "#ff00ff", "up"],
  ["", "MA30: 5.607", "#f00000", "down"],
  ["黑", ": 0.000", "#0068ff", ""],
  ["白", ": 0.000", "#fff", ""],
];
const SUB_LEGEND: [string, string, string][] = [
  ["黑码", ": 0.000,", "#ff00ff"], ["黑", ": 0.000,", "#0068ff"], ["低买", "1: 0.000,", "#00ff00"], ["白马", ": 0.000,", "#ffff00"],
  ["白", ": 0.000,", "#fff"], ["低买", "2: 0.000,", "#fff"], ["奔马", ": 0.000,", "#f00000"], ["饮水", ": 0.000", "#0068ff"],
];
const INDICATORS = ["ARBR", "BIAS", "CCI", "CJBS", "CR", "DMI", "KD", "KDJ", "MACD", "OBV", "PSY", "RSI", "SHX", "W&R", "ZLJC", "DMA", "MA", "BOLL"];

const SELL = [["5", "5.68", "287"], ["4", "5.67", "376"], ["3", "5.66", "213"], ["2", "5.65", "365"], ["1", "5.64", "117"]];
const BUY = [["1", "5.63", "293"], ["2", "5.62", "297"], ["3", "5.61", "476"], ["4", "5.60", "758"], ["5", "5.59", "238"]];

type Fact = [string, React.ReactNode, string, string, React.ReactNode, string];
const FACTS: Fact[] = [
  ["最新", "5.63", GREEN, "均价", "5.66", GREEN],
  ["涨跌", "-0.05", GREEN, "今开", "5.68", GREY],
  ["涨幅", "-0.88%", GREEN, "最高", "5.74", ROSE],
  ["总手", "57319", YELLOW, "最低", "5.62", GREEN],
  ["总额", <>3246<Unit>万</Unit></>, CYAN, "换手", "1.10%", YELLOW],
  ["量比", "0.44", GREY, "换Ｚ", "1.50%", YELLOW],
  ["涨停", "6.25", ROSE, "跌停", "5.11", GREEN],
  ["买限", "–", GREY, "卖限", "", GREY],
  ["内盘", "30468", GREEN, "外盘", "26851", ROSE],
];
const VALUES: Fact[] = [
  ["市盈", <>-192.92<Unit>③</Unit></>, YELLOW, "市净", "1.69", GREY],
  ["总值", <>29.37<Unit>亿</Unit></>, YELLOW, "流值", <>29.37<Unit>亿</Unit></>, YELLOW],
];
const TICKS: [string, string, string, string][] = [
  ["14:55", "5.63", "", "39"], [":09", "5.63", "", "9"], [":11", "5.63", "", "25"], [":13", "5.64", "up", "252"], [":28", "5.64", "", "17"],
  [":31", "5.64", "", "33"], [":35", "5.64", "", "280"], [":40", "5.64", "", "10"], [":45", "5.64", "", "2"], ["14:56", "5.64", "", "7"],
  [":06", "5.63", "down", "2"], [":11", "5.64", "up", "4"], [":15", "5.64", "", "3"], [":25", "5.64", "", ""], [":36", "5.64", "", "420"],
  [":37", "5.64", "", "27"], [":59", "5.63", "down", "8"], ["15:00", "5.63", "", "696"],
];

function FactRows({ rows }: { rows: Fact[] }) {
  return (
    <Facts>
      <colgroup><col style={{ width: 32 }} /><col style={{ width: 80 }} /><col style={{ width: 46 }} /><col /></colgroup>
      <tbody>
        {rows.map(([a, av, ac, b, bv, bc]) => (
          <tr key={a}>
            <th scope="row">{a}</th>
            <Num $c={ac} $right>{av}</Num>
            <th scope="row">{b}</th>
            <Num $c={bc} $right>{bv}</Num>
          </tr>
        ))}
      </tbody>
    </Facts>
  );
}

function OrderBook({ side, rows, height, top }: { side: string; rows: string[][]; height: number; top?: number }) {
  return (
    <Block $h={height} $top={top}>
      <Side><span>{side}</span><span>盘</span></Side>
      <Book>
        <colgroup><col style={{ width: 52 }} /><col style={{ width: 50 }} /><col /></colgroup>
        <tbody>
          {rows.map(([level, price, volume]) => (
            <tr key={level}>
              <th scope="row">{level}</th>
              <Num $c={price === "5.68" ? GREY : GREEN}>{price}</Num>
              <Num $c="#e6e600"><VolumeText>{volume}</VolumeText></Num>
            </tr>
          ))}
        </tbody>
      </Book>
    </Block>
  );
}

function TickArrow({ up }: { up: boolean }) {
  return (
    <Arrow width="10" height="10" viewBox="0 0 10 10" aria-hidden="true">
      <path d={up ? "M5 0l5 5h-3v5h-3v-5h-4z" : "M5 10l5-5h-3v-5h-3v5h-4z"} fill={up ? ROSE : GREEN} />
    </Arrow>
  );
}

function TrendArrow({ up }: { up: boolean }) {
  return (
    <svg width="6" height="11" viewBox="0 0 6 11" fill="none" stroke={up ? ROSE : GREEN} aria-hidden="true">
      <path d={up ? "M3.500 11v-10M1 4l2.500-3l2.500 3" : "M3.500 0v10M1 7l2.500 3l2.500-3"} />
    </svg>
  );
}

type Index = { name: string; nameW: number; w: number; price: string; change: string; pct: string; vol: string; up?: boolean };
const INDEXES: Index[] = [
  { name: "数", nameW: 15, w: 245, price: "2877.70", change: "15.55", pct: "0.54%", vol: "2,911.0" },
  { name: "深证成指", nameW: 69, w: 245, price: "9988.79", change: "49.93", pct: "0.55%", vol: "3,658.3" },
  { name: "北证50", nameW: 61, w: 253, price: "979.909", change: "9.760", pct: "1.000%", vol: "101.9", up: true },
  { name: "创业板指", nameW: 69, w: 245, price: "1742.09", change: "7.50", pct: "0.43%", vol: "1,451.9" },
  { name: "科创50", nameW: 53, w: 263, price: "777.15", change: "5.79", pct: "0.74%", vol: "410.4" },
];

export default function App() {
  return (
    <Page>
      <Global />
      <TopStrip>
        {STRIP.map(([label, w, bg]) => (
          <StripTab key={label} $w={w} $bg={bg}>{label}</StripTab>
        ))}
      </TopStrip>
      <Main>
        <Left>
          <Toolbar>
            <ArrowButton aria-label="菜单" />
            {TOOLS.map((t, n) => (
              <React.Fragment key={n}>
                <ToolButton $w={t.w} $end={!t.menu} $active={t.active}>{t.label}</ToolButton>
                {t.menu && <ArrowButton aria-label="展开" />}
              </React.Fragment>
            ))}
            <Spacer />
            <SideTool>竞</SideTool>
            <SideTool>测</SideTool>
            <SideTool>标</SideTool>
            <SideTool $on $w={23} aria-label="十字光标">
              <svg width="14" height="14" viewBox="0 0 14 14" fill="none" stroke="#ffff00">
                <rect x="0.5" y="0.5" width="13" height="13" rx="1" />
                <path d="M7 2v10M2 7h10" />
                <path d="M7 4.500l2.500 2.500l-2.500 2.500l-2.500-2.500z" fill={PANEL} />
                <path d="M7 5v4M5 7h4" />
              </svg>
            </SideTool>
            <SideTool>权</SideTool>
            <SideTool>线</SideTool>
            <SideTool>移</SideTool>
            <SideTool $w={23} aria-label="收起">
              <svg width="14" height="13" viewBox="0 0 14 13" fill="none" stroke={GREY} shapeRendering="crispEdges">
                <path d="M0.500 0.500h13v12h-13zM0 3.500h14" />
                <path d="M4 9h6l-3-3z" fill={GREY} stroke="none" />
              </svg>
            </SideTool>
            <SideTool $w={23} aria-label="侧栏">
              <svg width="14" height="13" viewBox="0 0 14 13" fill="none" stroke={GREY} shapeRendering="crispEdges">
                <path d="M0.500 0.500h13v12h-13zM9.500 0v13" />
                <path d="M3 2v9l5-4.500z" fill={GREY} stroke="none" />
              </svg>
            </SideTool>
          </Toolbar>
          <Legend $h={13} $pad={18} $gap={5}>
            <LegendItem>
              六国化工<LegendItem $c={ROSE}>日线</LegendItem>
              <Dot />
              颠倒黑白<Mono>(15,3,1)</Mono>
            </LegendItem>
            {PRICE_LEGEND.map(([cn, text, c, trend]) => (
              <LegendItem key={cn + text} $c={c}>
                {cn}<Mono>{text}</Mono>
                {trend && <TrendArrow up={trend === "up"} />}
                <Mono>,</Mono>
              </LegendItem>
            ))}
          </Legend>
          <PriceChart />
          <SubPanel>
            <Legend $h={12} $pad={6} $gap={3}>
              <LegendItem>黑马回头<Mono>(15,3,1) </Mono></LegendItem>
              {SUB_LEGEND.map(([cn, text, c]) => (
                <LegendItem key={cn + text} $c={c}>{cn}<Mono>{text}</Mono></LegendItem>
              ))}
            </Legend>
            <SignalChart />
          </SubPanel>
          <DateAxis />
          <TabRow>
            <IndicatorTab $w={11}>板</IndicatorTab>
            {INDICATORS.map((name) => (
              <IndicatorTab key={name} $w={60}>{name}</IndicatorTab>
            ))}
          </TabRow>
        </Left>
        <Quote>
          <QuoteHead>
            <Badge>R</Badge>
            <Code>600470</Code>
            <StockName>六国化工</StockName>
          </QuoteHead>
          <OrderBook side="卖" rows={SELL} height={106} top={1} />
          <OrderBook side="买" rows={BUY} height={105} />
          <Block $h={189}><FactRows rows={FACTS} /></Block>
          <Block $h={62}>
            <Column>
              <FactRows rows={VALUES} />
              <Status><span>交易状态</span><span>已闭市</span></Status>
            </Column>
          </Block>
          <TickHead>
            <TickTab $grow>分时成交</TickTab>
            <TickTab>细</TickTab>
          </TickHead>
          <Ticks>
            <colgroup><col style={{ width: 37 }} /><col style={{ width: 60 }} /><col style={{ width: 50 }} /><col /></colgroup>
            <tbody>
              {TICKS.map(([time, price, dir, vol], n) => {
                const major = time.length > 3;
                return (
                  <Tick key={n} $dotted={major && n > 0} $on={time === "15:00"}>
                    <Time scope="row" $major={major}>{time}</Time>
                    <td />
                    <Num $c={GREEN}>{price}{dir && <TickArrow up={dir === "up"} />}</Num>
                    <Num $right $c={dir === "up" ? ROSE : GREEN}>{vol}</Num>
                  </Tick>
                );
              })}
            </tbody>
          </Ticks>
          <BottomTabs>
            <BottomTab $on>分笔</BottomTab>
            <BottomTab>分价</BottomTab>
            <BottomTab>成本</BottomTab>
          </BottomTabs>
        </Quote>
      </Main>
      <Ticker>
        {INDEXES.map((x) => (
          <React.Fragment key={x.name}>
            <Cell $w={x.nameW} $name><IndexName>{x.name}</IndexName></Cell>
            <Cell $w={x.w}>
              <Move $up={x.up}>{x.price}</Move>
              <Move $up={x.up}>{x.up ? "+" : "▼"}{x.change}</Move>
              <Move $up={x.up}>{x.up ? "+" : "▼"}{x.pct}</Move>
              <span>{x.vol}<IndexName>亿</IndexName></span>
            </Cell>
          </React.Fragment>
        ))}
        <Cell $w={122} $name><IndexName>标普500指数</IndexName></Cell>
        <Cell $w={135}><Move>4756.50</Move><Move>▼7.04</Move></Cell>
      </Ticker>
      <NetWidget>
        <svg width="26" height="138" viewBox="0 0 26 138" role="img" aria-label="网速">
          <defs>
            <linearGradient id="level" x1="0" y1="0" x2="0" y2="1">
              <stop offset="0" stopColor="#d0c830" />
              <stop offset="1" stopColor="#30c8a0" />
            </linearGradient>
          </defs>
          <circle cx="17" cy="16" r="5" fill="#0fb870" />
          <path d="M4 32.500h22M4 76.500h22" stroke="#1f3038" />
          <rect x="12" y="39" width="10" height="30" rx="5" fill="#202226" />
          <path d="M12 56h10v8a5 5 0 0 1-10 0z" fill="url(#level)" />
          <path d="M9 98l3 4h-2v3h-2v-3h-2z" fill="#20a0f0" />
          <path d="M9 133l3-4h-2v-3h-2v3h-2z" fill="#10b070" />
          <g fontFamily="Noto Sans, sans-serif" fontSize="11">
            <text x="10" y="94" fill="#fff">0.1</text>
            <text x="7" y="121" fill="#fff">17.5</text>
            <text x="14" y="106" fill="#a0a0a0">K/s</text>
            <text x="14" y="133" fill="#a0a0a0">K/s</text>
          </g>
        </svg>
      </NetWidget>
      <Mark>
        <MarkText>创想财富</MarkText>
        <MarkStroke width="218" height="26" viewBox="0 0 218 26" aria-hidden="true">
          <path d="M0 22C60 14 110 6 164 7c4 1 0 3-4 4c-20 2-40 5-58 9c40-5 70-5 116-4c-44 0-86 3-128 8c-8 0-8-3-2-5c10-3 18-4 30-6c-36 2-80 6-118 10z" fill="#f00000" />
        </MarkStroke>
        <MarkSite>995168.cn</MarkSite>
      </Mark>
    </Page>
  );
}
